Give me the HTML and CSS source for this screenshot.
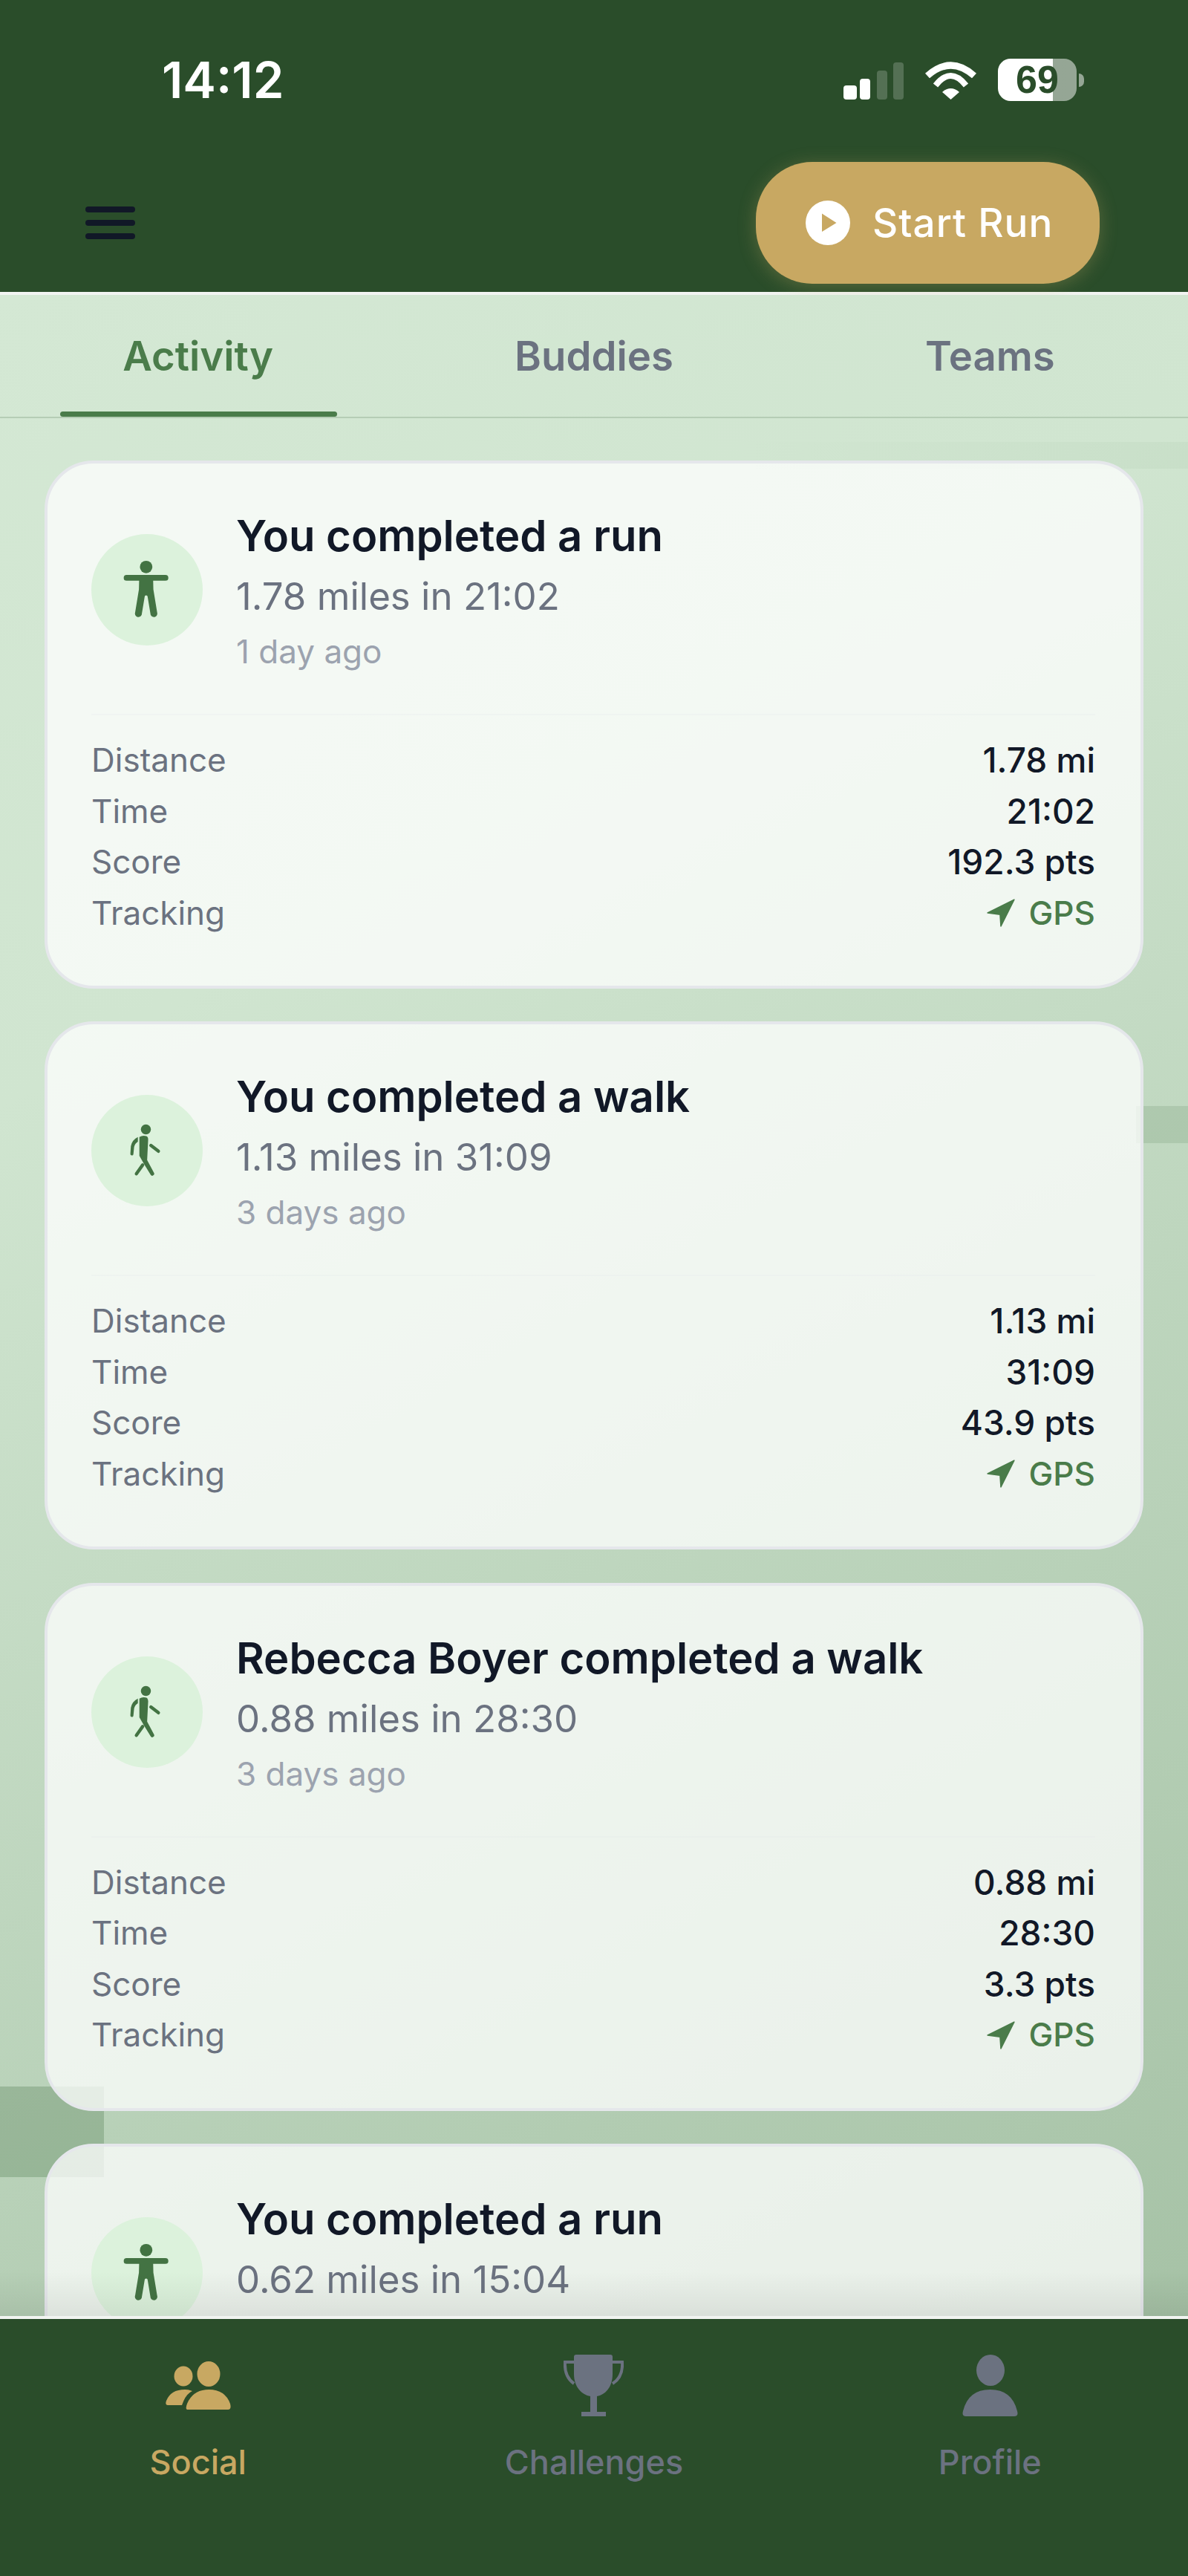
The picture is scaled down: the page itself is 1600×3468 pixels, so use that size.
FILE: index.html
```html
<!DOCTYPE html>
<html lang="en">
<head>
    <meta charset="UTF-8">
    <title>Social</title>
    <link rel="stylesheet" href="styles.css">
</head>
<body>
    <svg class="defs" width="0" height="0">
        <symbol id="run" viewBox="98 88 447 447">
            <circle cx="318" cy="220" r="25"/>
            <rect x="228" y="252" width="179" height="23" rx="11.5"/>
            <path d="M290 270H346L347 310L362 402A13 13 0 0 1 336 412L324 340A6 6 0 0 0 312 340L300 412A13 13 0 0 1 274 402L289 310Z"/>
        </symbol>
        <symbol id="walk" viewBox="70 75 445 445">
            <circle cx="288" cy="213" r="20"/>
            <path d="M262 243Q276 235 290 240Q298 244 297 256L293 335L320 386A7 7 0 0 1 307 394L280 350L262 318Z"/>
            <path d="M256 243Q232 255 228 280L226 310A6 6 0 0 0 238 312L241 283Q244 270 256 262Z"/>
            <path class="limb" d="M308 277L338 300M275 355L250 390"/>
        </symbol>
        <symbol id="gps" viewBox="0 0 38 38">
            <path d="M36 2L2 19L18 21L19 36Z"/>
        </symbol>
    </svg>

    <header class="top">
        <div class="status">
            <span class="clock">14:12</span>
            <div class="status-icons">
                <svg class="signal" width="81" height="50" viewBox="0 0 81 50">
                    <rect x="0" y="31" width="18" height="19" rx="4"/>
                    <rect x="22" y="22" width="14" height="28" rx="4"/>
                    <rect class="dim" x="45" y="11" width="14" height="39" rx="4"/>
                    <rect class="dim" x="67" y="0" width="14" height="50" rx="4"/>
                </svg>
                <svg class="wifi" width="71" height="52" viewBox="0 0 71 52">
                    <path class="arc" d="M4 19Q35.5 -9 67 19"/>
                    <path class="arc mid" d="M15 32Q35.5 6 56 32"/>
                    <path d="M35.5 51L24 41Q35.5 31 47 41Z"/>
                </svg>
                <div class="battery"><span>69</span></div>
                <div class="battery-nub"></div>
            </div>
        </div>
        <div class="top-row">
            <button class="menu-btn" aria-label="Menu"><i></i><i></i><i></i></button>
            <button class="start-btn">
                <svg width="60" height="60" viewBox="0 0 60 60">
                    <circle cx="30" cy="30" r="30" fill="#fff"/>
                    <path d="M22 17.5L41.5 30L22 42Z" fill="#c8a862"/>
                </svg>
                Start Run
            </button>
        </div>
    </header>

    <main class="content">
        <div class="patch patch-a"></div>
        <div class="patch patch-b"></div>
        <div class="patch patch-c"></div>

        <nav class="tabs">
            <a class="tab active">Activity</a>
            <a class="tab">Buddies</a>
            <a class="tab">Teams</a>
        </nav>

        <section class="feed">
            <article class="card">
                <div class="card-head">
                    <div class="avatar"><svg><use href="#run"/></svg></div>
                    <div>
                        <h3>You completed a run</h3>
                        <p class="sub">1.78 miles in 21:02</p>
                        <p class="ago">1 day ago</p>
                    </div>
                </div>
                <dl class="stats">
                    <div><dt>Distance</dt><dd>1.78 mi</dd></div>
                    <div><dt>Time</dt><dd>21:02</dd></div>
                    <div><dt>Score</dt><dd>192.3 pts</dd></div>
                    <div><dt>Tracking</dt><dd class="gps"><svg><use href="#gps"/></svg>GPS</dd></div>
                </dl>
            </article>

            <article class="card">
                <div class="card-head">
                    <div class="avatar"><svg><use href="#walk"/></svg></div>
                    <div>
                        <h3>You completed a walk</h3>
                        <p class="sub">1.13 miles in 31:09</p>
                        <p class="ago">3 days ago</p>
                    </div>
                </div>
                <dl class="stats">
                    <div><dt>Distance</dt><dd>1.13 mi</dd></div>
                    <div><dt>Time</dt><dd>31:09</dd></div>
                    <div><dt>Score</dt><dd>43.9 pts</dd></div>
                    <div><dt>Tracking</dt><dd class="gps"><svg><use href="#gps"/></svg>GPS</dd></div>
                </dl>
            </article>

            <article class="card">
                <div class="card-head">
                    <div class="avatar"><svg><use href="#walk"/></svg></div>
                    <div>
                        <h3>Rebecca Boyer completed a walk</h3>
                        <p class="sub">0.88 miles in 28:30</p>
                        <p class="ago">3 days ago</p>
                    </div>
                </div>
                <dl class="stats">
                    <div><dt>Distance</dt><dd>0.88 mi</dd></div>
                    <div><dt>Time</dt><dd>28:30</dd></div>
                    <div><dt>Score</dt><dd>3.3 pts</dd></div>
                    <div><dt>Tracking</dt><dd class="gps"><svg><use href="#gps"/></svg>GPS</dd></div>
                </dl>
            </article>

            <article class="card">
                <div class="card-head">
                    <div class="avatar"><svg><use href="#run"/></svg></div>
                    <div>
                        <h3>You completed a run</h3>
                        <p class="sub">0.62 miles in 15:04</p>
                    </div>
                </div>
            </article>
        </section>

        <div class="fade"></div>
    </main>

    <footer class="bottom-nav">
        <a class="nav-item active">
            <svg class="social" width="88" height="66" viewBox="0 0 88 66">
                <ellipse cx="24" cy="20" rx="12.5" ry="13.5"/>
                <ellipse cx="58" cy="17" rx="15.5" ry="17"/>
                <path d="M30 65Q26 65 29 57Q37 38 58.5 38Q80 38 87 57Q89 65 84 65Z"/>
                <path d="M3 59Q-1 59 1 53Q7 38 26 38Q32 38 36 40Q27 44 22 59Z"/>
            </svg>
            <span>Social</span>
        </a>
        <a class="nav-item">
            <svg width="81" height="83" viewBox="0 0 81 83">
                <path d="M14 3Q14 0 17 0H63Q66 0 66 3V26C66 44 56 54 45 56V77H57V83H24V77H36V56C25 54 14 44 14 26Z"/>
                <path class="handle" d="M66 10H79C80 25 74 34 66 39M14 10H2C1 25 7 34 14 39"/>
            </svg>
            <span>Challenges</span>
        </a>
        <a class="nav-item">
            <svg width="75" height="83" viewBox="0 0 75 83">
                <ellipse cx="38" cy="21" rx="19" ry="21"/>
                <path d="M5 83Q-1 83 1 76Q8 47 37.5 47Q67 47 74 76Q76 83 70 83Z"/>
            </svg>
            <span>Profile</span>
        </a>
    </footer>
</body>
</html>
```

FILE: styles.css
```css
* {
    box-sizing: border-box;
}
html, body {
    margin: 0;
    height: 3468px;
}
body {
    display: flex;
    flex-direction: column;
    overflow: hidden;
    font-family: Inter, "Noto Sans", sans-serif;
    background: #2a4d2a;
    color: #111827;
}
.defs {
    position: absolute;
}

/* top bar */
.top {
    height: 397px;
    flex: none;
    padding-top: 79px;
    background: #2a4d2a;
    border-bottom: 4px solid #f1f4f1;
}
.status {
    display: flex;
    justify-content: space-between;
    align-items: center;
    height: 57px;
    padding: 0 140px 0 218px;
}
.clock {
    color: #fff;
    font-size: 67px;
    font-weight: 600;
}
.status-icons {
    display: flex;
    align-items: center;
}
.signal {
    fill: #fff;
    margin: 3px 28px 0 0;
}
.signal .dim {
    opacity: 0.2;
}
.wifi {
    fill: #fff;
    margin: 2px 28px 0 0;
}
.wifi .arc {
    fill: none;
    stroke: #fff;
    stroke-width: 9;
}
.wifi .mid {
    stroke-width: 8;
}
.battery {
    width: 106px;
    height: 57px;
    border-radius: 17px;
    background: linear-gradient(90deg, #fff 70%, rgba(255, 255, 255, 0.5) 70%);
    color: #2a4d2a;
    font-family: "Liberation Sans", sans-serif;
    font-size: 52px;
    font-weight: 700;
    line-height: 57px;
    text-align: center;
}
.battery-nub {
    width: 7px;
    height: 18px;
    margin-left: 3px;
    border-radius: 0 9px 9px 0;
    background: rgba(255, 255, 255, 0.5);
}
.top-row {
    display: flex;
    justify-content: space-between;
    align-items: center;
    height: 164px;
    margin-top: 82px;
    padding: 0 119px 0 115px;
}
.menu-btn {
    display: flex;
    flex-direction: column;
    gap: 10px;
    width: 67px;
    padding: 0;
    border: none;
    background: none;
}
.menu-btn i {
    display: block;
    height: 8px;
    border-radius: 4px;
    background: #111827;
}
.start-btn {
    display: flex;
    align-items: center;
    gap: 30px;
    width: 463px;
    height: 164px;
    padding: 0 0 0 67px;
    border: none;
    border-radius: 76px;
    background: #c8a862;
    box-shadow: 0 4px 24px rgba(200, 168, 98, 0.3);
    color: #fff;
    font: 500 53px Inter, sans-serif;
    letter-spacing: 1px;
}

/* middle */
.content {
    position: relative;
    flex: 1;
    overflow: hidden;
    background: linear-gradient(150deg, #d4e8d4 0%, #d0e5d0 30%, #a6c2a6 100%);
}
.patch {
    position: absolute;
}
.patch-a {
    top: 198px;
    left: 1000px;
    width: 600px;
    height: 36px;
    background: linear-gradient(90deg, rgba(120, 160, 120, 0), rgba(120, 160, 120, 0.08));
}
.patch-b {
    top: 1092px;
    left: 1530px;
    width: 70px;
    height: 50px;
    background: rgba(100, 140, 100, 0.2);
}
.patch-c {
    top: 2412px;
    left: 0;
    width: 140px;
    height: 122px;
    background: rgba(70, 110, 70, 0.28);
}
.fade {
    position: absolute;
    left: 0;
    right: 0;
    bottom: 0;
    height: 60px;
    background: linear-gradient(rgba(0, 0, 0, 0), rgba(0, 0, 0, 0.07));
}
.tabs {
    position: relative;
    display: grid;
    grid-template-columns: repeat(3, 1fr);
    height: 166px;
    border-bottom: 2px solid #b5cdb5;
}
.tab {
    position: relative;
    padding-top: 50px;
    color: #6b7280;
    font-size: 54.5px;
    font-weight: 600;
    line-height: 64px;
    text-align: center;
}
.tab.active {
    color: #4a7c4a;
}
.tab.active::after {
    content: "";
    position: absolute;
    left: 81px;
    bottom: 0;
    width: 373px;
    height: 7px;
    border-radius: 4px;
    background: #4a7c4a;
}
.feed {
    position: relative;
    display: flex;
    flex-direction: column;
    gap: 44.3px;
    padding: 57px 60px 0;
}
.card {
    flex: none;
    height: 711px;
    padding: 57px 61px 0 59px;
    border: 4px solid #e5e7eb;
    border-radius: 66px;
    background: rgba(255, 255, 255, 0.75);
}
.card-head {
    display: flex;
    align-items: flex-start;
    gap: 45px;
    padding-bottom: 50px;
    border-bottom: 2px solid rgba(229, 231, 235, 0.25);
}
.avatar {
    flex: none;
    width: 150px;
    height: 150px;
    margin-top: 38px;
    border-radius: 50%;
    background: #dcf2dc;
}
.avatar svg {
    display: block;
    width: 150px;
    height: 150px;
    fill: #437343;
}
.limb {
    fill: none;
    stroke: #437343;
    stroke-width: 13;
    stroke-linecap: round;
}
h3 {
    margin: 0;
    font-size: 58px;
    font-weight: 600;
    line-height: 80px;
}
.sub {
    margin: 1px 0 0;
    color: #6b7280;
    font-size: 51px;
    line-height: 82px;
}
.ago {
    margin: 0;
    color: #9ca3af;
    font-size: 44px;
    line-height: 67px;
}
.stats {
    margin: 26px 0 0;
    font-size: 44px;
    line-height: 68.6px;
}
.stats div {
    display: flex;
    justify-content: space-between;
}
.stats dt {
    color: #6b7280;
}
.stats dd {
    margin: 0;
    font-size: 46px;
    font-weight: 500;
}
.stats .gps {
    display: flex;
    align-items: center;
    gap: 17px;
    color: #4a7c4a;
    font-size: 44px;
    font-weight: 500;
}
.gps svg {
    width: 40px;
    height: 40px;
    fill: #4a7c4a;
    stroke: #4a7c4a;
    stroke-width: 1.5;
    stroke-linejoin: round;
}

/* bottom nav */
.bottom-nav {
    display: grid;
    grid-template-columns: repeat(3, 1fr);
    flex: none;
    height: 350px;
    padding-top: 48px;
    background: #2a4d2a;
    border-top: 4px solid #f1f4f1;
}
.nav-item {
    display: flex;
    flex-direction: column;
    align-items: center;
    color: #6b7280;
    font-size: 45px;
    font-weight: 500;
}
.nav-item svg {
    height: 83px;
    fill: #6b7280;
}
.nav-item .handle {
    fill: none;
    stroke: #6b7280;
    stroke-width: 4;
}
.nav-item .social {
    height: 66px;
    margin: 9px 0 8px;
}
.nav-item span {
    margin-top: 34px;
    line-height: 56px;
}
.nav-item.active {
    color: #c8a862;
}
.nav-item.active svg {
    fill: #c8a862;
}
```
